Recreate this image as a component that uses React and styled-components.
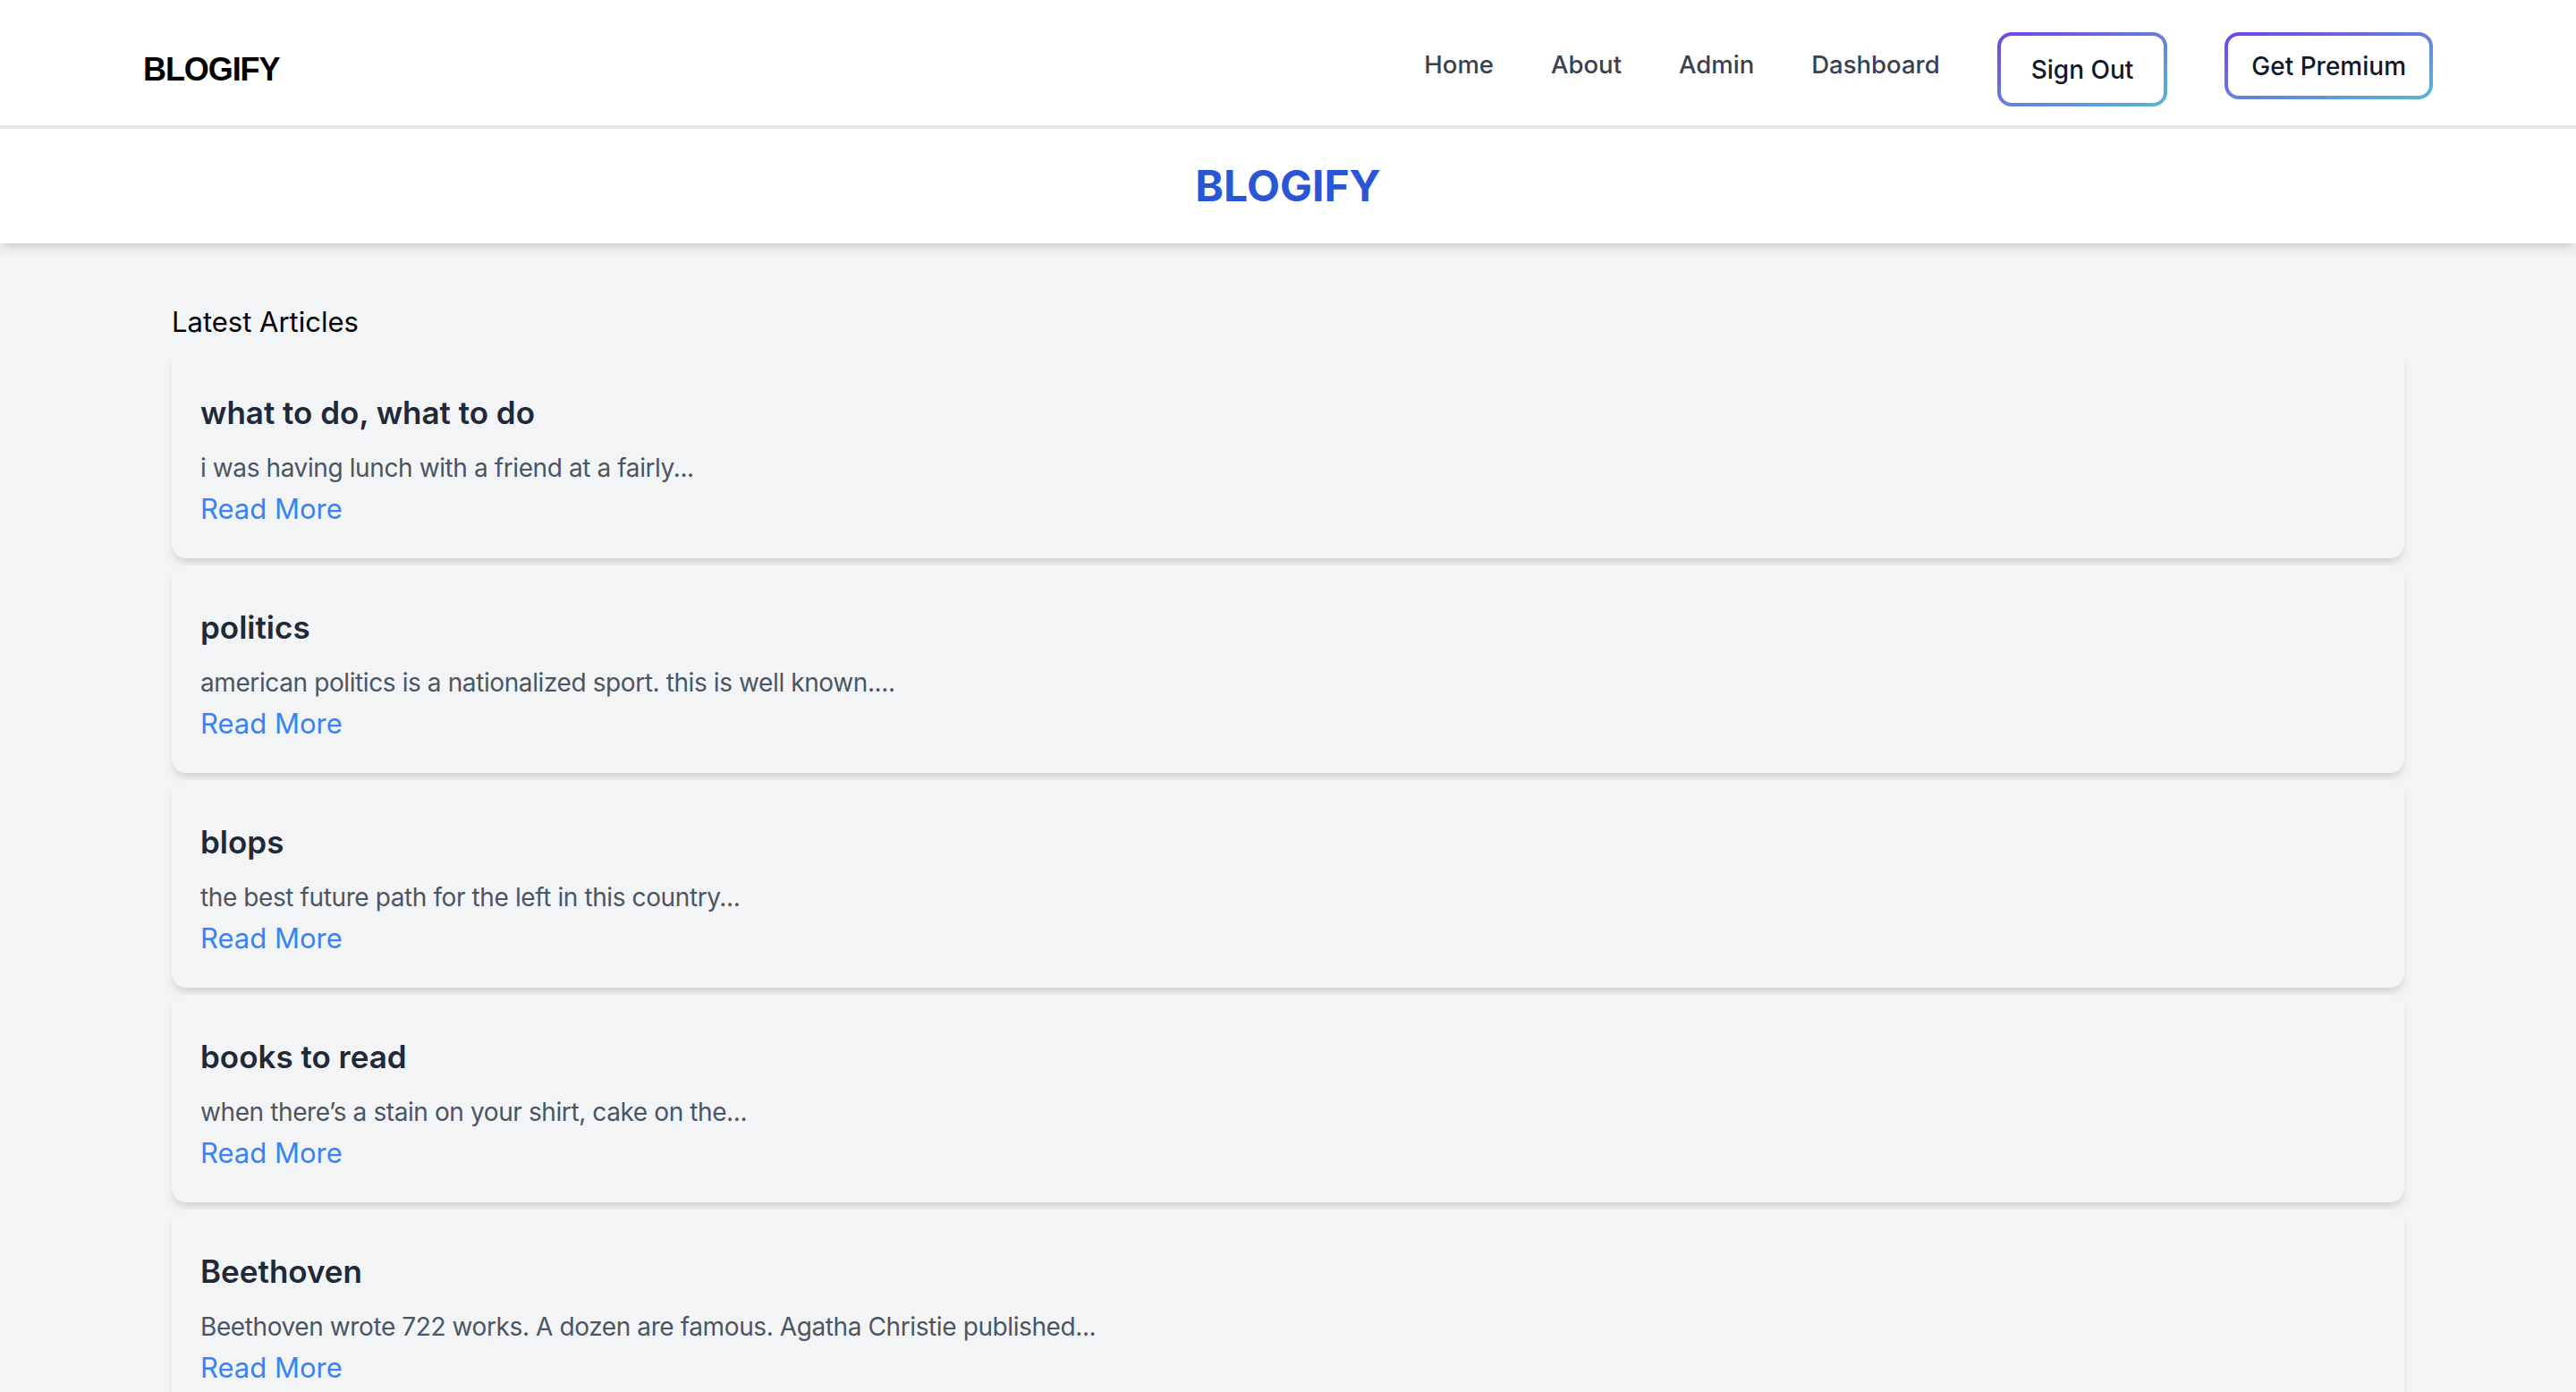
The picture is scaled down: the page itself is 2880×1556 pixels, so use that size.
import styled, { createGlobalStyle } from 'styled-components';

const articles = [
    { title: 'what to do, what to do', excerpt: 'i was having lunch with a friend at a fairly...' },
    { title: 'politics', excerpt: 'american politics is a nationalized sport. this is well known....' },
    { title: 'blops', excerpt: 'the best future path for the left in this country...' },
    { title: 'books to read', excerpt: 'when there’s a stain on your shirt, cake on the...' },
    { title: 'Beethoven', excerpt: 'Beethoven wrote 722 works. A dozen are famous. Agatha Christie published...' },
];

const GlobalStyle = createGlobalStyle`
    * {
        box-sizing: border-box;
    }
    html, body {
        margin: 0;
        padding: 0;
        overflow: hidden;
    }
    body {
        background: #f3f4f6;
        font-family: Inter, "Noto Sans", sans-serif;
    }
`;

const App = () => {
    return (
        <>
            <GlobalStyle />
            <Nav>
                <Logo>BLOGIFY</Logo>
                <NavRight>
                    <NavLink href="#">Home</NavLink>
                    <NavLink href="#">About</NavLink>
                    <NavLink href="#">Admin</NavLink>
                    <NavLink href="#">Dashboard</NavLink>
                    <GradientButton $py={17.5} $px={34}>Sign Out</GradientButton>
                    <GradientButton $py={13.5} $px={26}>Get Premium</GradientButton>
                </NavRight>
            </Nav>
            <Banner>
                <BannerTitle>BLOGIFY</BannerTitle>
            </Banner>
            <Main>
                <SectionTitle>Latest Articles</SectionTitle>
                <CardList>
                    {articles.map((a) => (
                        <Card key={a.title}>
                            <CardTitle>{a.title}</CardTitle>
                            <Excerpt>{a.excerpt}</Excerpt>
                            <ReadMore href="#">Read More</ReadMore>
                        </Card>
                    ))}
                </CardList>
            </Main>
        </>
    );
};

export default App;

const Nav = styled.nav`
    display: flex;
    justify-content: space-between;
    align-items: flex-start;
    height: 144px;
    padding: 36px 160px 0 160px;
    background: #fff;
    border-bottom: 4px solid #e5e7eb;
`;

const Logo = styled.div`
    margin-top: 22px;
    font-family: "Liberation Sans", Arial, sans-serif;
    font-size: 36px;
    line-height: 40px;
    font-weight: 700;
    letter-spacing: -0.03em;
    color: #000;
`;

const NavRight = styled.div`
    display: flex;
    align-items: flex-start;
    gap: 64px;
`;

const NavLink = styled.a`
    margin-top: 16px;
    font-size: 27.5px;
    line-height: 40px;
    font-weight: 500;
    color: #374151;
    text-decoration: none;
`;

const GradientButton = styled.button`
    padding: ${(p) => p.$py}px ${(p) => p.$px}px;
    border: 4px solid transparent;
    border-radius: 16px;
    background: linear-gradient(#fff, #fff) padding-box,
        linear-gradient(to bottom right, #7341e9, #57b9d2) border-box;
    font-family: Inter, "Noto Sans", sans-serif;
    font-size: 28px;
    line-height: 40px;
    font-weight: 500;
    color: #111827;
    cursor: pointer;
`;

const Banner = styled.header`
    position: relative;
    padding: 32px 0;
    background: #fff;
    text-align: center;
    box-shadow: 0 8px 12px -2px rgb(0 0 0 / 10%), 0 4px 8px -4px rgb(0 0 0 / 10%);
`;

const BannerTitle = styled.h1`
    margin: 0;
    font-size: 48px;
    line-height: 64px;
    font-weight: 700;
    color: #2a56d6;
`;

const Main = styled.main`
    padding: 64px 192px 0;
`;

const SectionTitle = styled.h2`
    margin: 0 0 8px;
    font-size: 31px;
    line-height: 48px;
    font-weight: 400;
    color: #000;
`;

const CardList = styled.div`
    display: flex;
    flex-direction: column;
    gap: 8px;
`;

const Card = styled.article`
    padding: 40px 32px 32px;
    background: #f3f4f6;
    border-radius: 16px;
    box-shadow: 0 8px 12px -2px rgb(0 0 0 / 10%), 0 4px 8px -4px rgb(0 0 0 / 10%);
`;

const CardTitle = styled.h3`
    margin: 0 0 10px;
    font-size: 35px;
    line-height: 58px;
    font-weight: 600;
    color: #1f2937;
`;

const Excerpt = styled.p`
    margin: 0;
    font-size: 28px;
    line-height: 46px;
    letter-spacing: -0.4px;
    color: #4b5563;
`;

const ReadMore = styled.a`
    display: block;
    font-size: 31px;
    line-height: 46px;
    color: #3b82f6;
    text-decoration: none;
`;
